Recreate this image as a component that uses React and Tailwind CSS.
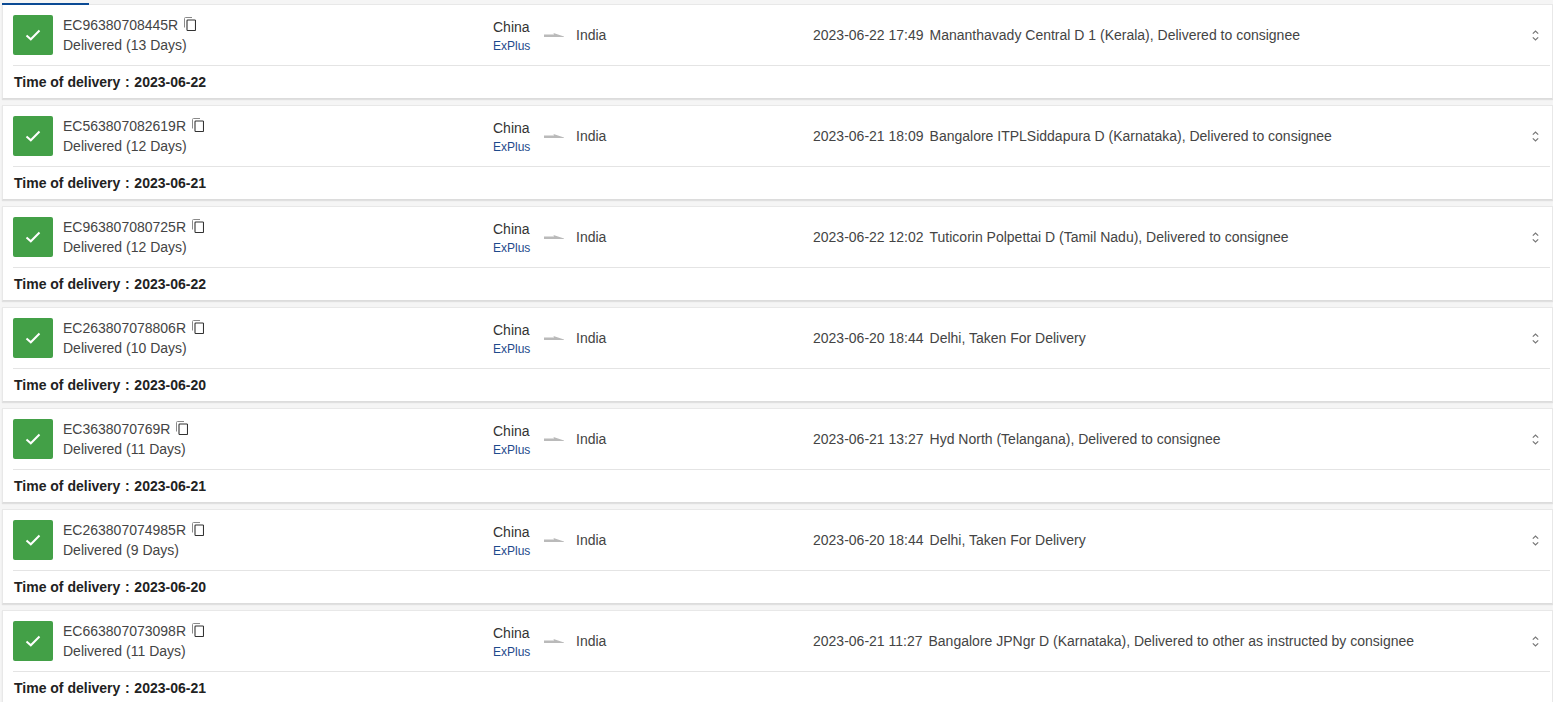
import React from 'react';

const rows = [
  { id: 'EC96380708445R', days: 13, time: '2023-06-22 17:49', event: 'Mananthavady Central D 1 (Kerala), Delivered to consignee', date: '2023-06-22' },
  { id: 'EC563807082619R', days: 12, time: '2023-06-21 18:09', event: 'Bangalore ITPLSiddapura D (Karnataka), Delivered to consignee', date: '2023-06-21' },
  { id: 'EC963807080725R', days: 12, time: '2023-06-22 12:02', event: 'Tuticorin Polpettai D (Tamil Nadu), Delivered to consignee', date: '2023-06-22' },
  { id: 'EC263807078806R', days: 10, time: '2023-06-20 18:44', event: 'Delhi, Taken For Delivery', date: '2023-06-20' },
  { id: 'EC3638070769R', days: 11, time: '2023-06-21 13:27', event: 'Hyd North (Telangana), Delivered to consignee', date: '2023-06-21' },
  { id: 'EC263807074985R', days: 9, time: '2023-06-20 18:44', event: 'Delhi, Taken For Delivery', date: '2023-06-20' },
  { id: 'EC663807073098R', days: 11, time: '2023-06-21 11:27', event: 'Bangalore JPNgr D (Karnataka), Delivered to other as instructed by consignee', date: '2023-06-21' },
];

function CopyIcon() {
  return (
    <svg width="12" height="14" viewBox="0 0 12 14" fill="none" className="ml-[6px] mt-[-2px] shrink-0">
      <path d="M.5 10.5V1.5A1 1 0 0 1 1.5.5H8" stroke="#8a8a8a" strokeWidth="1" />
      <rect x="3" y="3" width="8.5" height="10.5" rx=".8" stroke="#333" strokeWidth="1.1" />
    </svg>
  );
}

function Arrow() {
  return (
    <svg width="20" height="8" viewBox="0 0 20 8" className="block shrink-0">
      <path d="M0 3.6H10L9.5 2L20 5.6V6H0Z" fill="#bababa" />
    </svg>
  );
}

function Sorter() {
  return (
    <svg width="7" height="11" viewBox="0 0 7 11" fill="none" stroke="#777" strokeWidth="1.2" className="shrink-0">
      <path d="M.8 3.6L3.5 1L6.2 3.6" />
      <path d="M.8 7.4L3.5 10L6.2 7.4" />
    </svg>
  );
}

function Card({ row }) {
  return (
    <div className="mb-[6px] h-[95px] border border-[#e8e8e8] border-b-[#dcdcdc] bg-white shadow-[0_1px_1px_#e0e0e0]">
      <div className="ml-[10px] mr-[2px] flex h-[61px] items-center border-b border-[#e4e4e4] pr-[11px]">
        <div className="flex h-[40px] w-[40px] shrink-0 items-center justify-center rounded-[2px] bg-[#43a047]">
          <svg width="16" height="12" viewBox="0 0 16 12" fill="none" stroke="#fff" strokeWidth="2">
            <path d="M1.5 6.5L5.8 10.3L14.5 1.5" />
          </svg>
        </div>
        <div className="ml-[10px] w-[430px] shrink-0 leading-[20px] text-[#444]">
          <div className="flex items-center">{row.id}<CopyIcon /></div>
          <div>Delivered ({row.days} Days)</div>
        </div>
        <div className="w-[51px] shrink-0 pt-[1px]">
          <div className="leading-[20px] text-[#333]">China</div>
          <div className="mt-[1px] text-[12px] leading-[16px] text-[#1e4a8c]">ExPlus</div>
        </div>
        <Arrow />
        <div className="ml-[12px] w-[237px] shrink-0 text-[#444]">India</div>
        <div className="flex min-w-0 flex-1 gap-[6px] text-[#444]">
          <span>{row.time}</span>
          <span>{row.event}</span>
        </div>
        <Sorter />
      </div>
      <div className="flex h-[32px] items-center pl-[11px] font-bold text-[#222]">
        <span>Time of delivery</span>
        <span className="w-[14px] text-center">:</span>
        <span>{row.date}</span>
      </div>
    </div>
  );
}

export default function App() {
  return (
    <div className="h-[702px] overflow-hidden bg-[#f5f5f5] text-[14px] font-['Liberation_Sans',sans-serif]">
      <div className="relative z-10 ml-[2px] mt-[3px] h-[2px] w-[87px] bg-[#0b4a94]" />
      <div className="ml-[2px] mt-[-1px]">
        {rows.map((row) => (
          <Card key={row.id} row={row} />
        ))}
      </div>
    </div>
  );
}
